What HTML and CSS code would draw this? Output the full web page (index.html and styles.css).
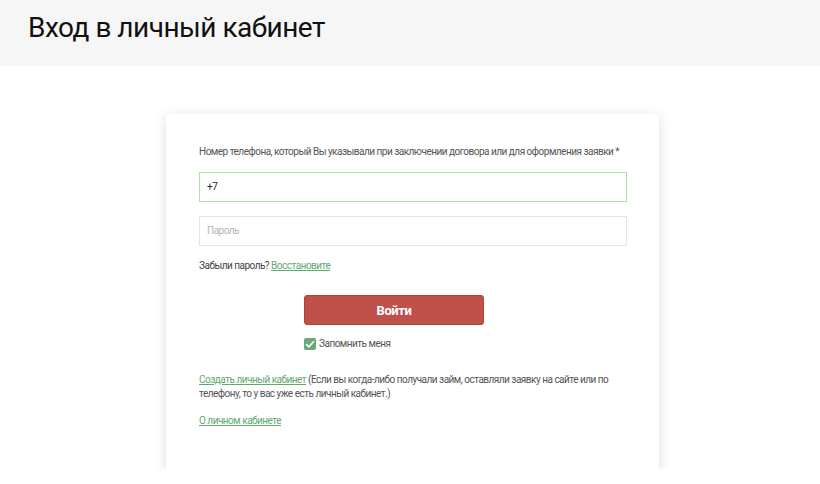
FILE: index.html
```html
<!DOCTYPE html>
<html lang="ru">
<head>
<meta charset="utf-8">
<title>Вход в личный кабинет</title>
<link rel="stylesheet" href="styles.css">
</head>
<body>
<header class="page-head">
  <h1 class="page-title">Вход в личный кабинет</h1>
</header>
<main class="page-body">
  <form class="card">
    <label class="field-label">Номер телефона, который Вы указывали при заключении договора или для оформления заявки *</label>
    <div class="input input-active">+7</div>
    <div class="input input-empty">Пароль</div>
    <p class="forgot">Забыли пароль? <a href="#" class="link">Восстановите</a></p>
    <div class="actions">
      <button type="button" class="btn-login">Войти</button>
      <div class="remember">
        <span class="check"><svg width="10" height="8" viewBox="0 0 10 8"><path d="M1 4.2 L3.8 6.8 L9 1.2" fill="none" stroke="#fff" stroke-width="1.6"/></svg></span>
        <span>Запомнить меня</span>
      </div>
    </div>
    <p class="create"><a href="#" class="link">Создать личный кабинет</a> <span>(Если вы когда-либо получали займ, оставляли заявку на сайте или по телефону, то у вас уже есть личный кабинет.)</span></p>
    <p class="about"><a href="#" class="link">О личном кабинете</a></p>
  </form>
</main>
</body>
</html>
```
FILE: styles.css
```css
html, body {
  margin: 0;
  padding: 0;
  background: #fff;
  font-family: Roboto, "Noto Sans", "Liberation Sans", sans-serif;
  color: #555;
}
.page-head {
  background: #f6f6f6;
  height: 66px;
  box-sizing: border-box;
  padding: 12px 0 0 28px;
}
.page-title {
  margin: 0;
  font-size: 28px;
  line-height: 32px;
  font-weight: 400;
  letter-spacing: -0.5px;
  color: #111;
}
.page-body {
  padding: 48px 0 0 166px;
}
.card {
  width: 493px;
  box-sizing: border-box;
  padding: 30px 32px 41px 33px;
  background: #fff;
  box-shadow: 0 3px 12px rgba(0,0,0,0.14);
  display: flex;
  flex-direction: column;
  font-size: 10px;
  letter-spacing: -0.5px;
}
.field-label {
  display: block;
  line-height: 16px;
  color: #555;
  white-space: nowrap;
}
.input {
  height: 30px;
  box-sizing: border-box;
  line-height: 28px;
  padding: 0 7px;
  font-size: 10px;
  background: #fff;
}
.input-active {
  margin-top: 12px;
  border: 1px solid #a8e49b;
  color: #222;
}
.input-empty {
  margin-top: 14px;
  border: 1px solid #e6e6e6;
  color: #b5b5b5;
}
.forgot {
  margin: 12px 0 0;
  line-height: 16px;
  color: #444;
}
.link {
  color: #5fa96d;
  text-decoration: underline;
}
.actions {
  margin: 21px 0 0 105px;
  width: 180px;
  display: flex;
  flex-direction: column;
}
.btn-login {
  height: 30px;
  width: 180px;
  border: 1px solid #b4403a;
  border-radius: 3px;
  background: #c0504a;
  color: #fff;
  font-family: inherit;
  font-size: 13px;
  font-weight: 700;
  letter-spacing: -0.4px;
  padding: 0;
}
.remember {
  margin-top: 13px;
  display: flex;
  align-items: center;
  gap: 3px;
  line-height: 12px;
  color: #555;
}
.check {
  width: 12px;
  height: 12px;
  border-radius: 2px;
  background: #6aa874;
  display: flex;
  align-items: center;
  justify-content: center;
}
.create {
  margin: 23px 0 0;
  line-height: 14px;
  color: #555;
}
.about {
  margin: 13px 0 0;
  line-height: 14px;
}
```
